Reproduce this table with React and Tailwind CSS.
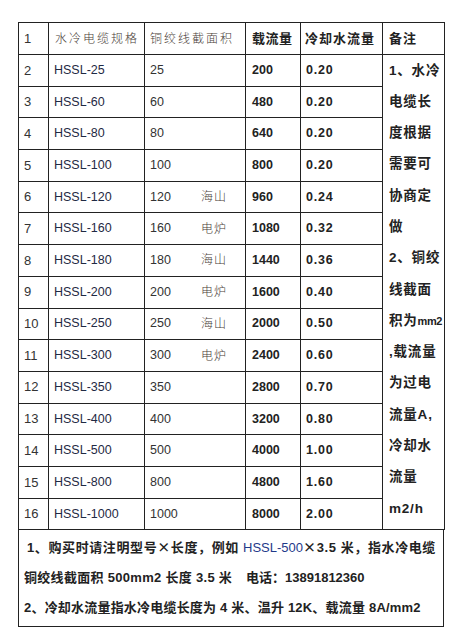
import React from "react";

const rows = [
  ["2", "HSSL-25", "25", "", "200", "0.20"],
  ["3", "HSSL-60", "60", "", "480", "0.20"],
  ["4", "HSSL-80", "80", "", "640", "0.20"],
  ["5", "HSSL-100", "100", "", "800", "0.20"],
  ["6", "HSSL-120", "120", "海山", "960", "0.24"],
  ["7", "HSSL-160", "160", "电炉", "1080", "0.32"],
  ["8", "HSSL-180", "180", "海山", "1440", "0.36"],
  ["9", "HSSL-200", "200", "电炉", "1600", "0.40"],
  ["10", "HSSL-250", "250", "海山", "2000", "0.50"],
  ["11", "HSSL-300", "300", "电炉", "2400", "0.60"],
  ["12", "HSSL-350", "350", "", "2800", "0.70"],
  ["13", "HSSL-400", "400", "", "3200", "0.80"],
  ["14", "HSSL-500", "500", "", "4000", "1.00"],
  ["15", "HSSL-800", "800", "", "4800", "1.60"],
  ["16", "HSSL-1000", "1000", "", "8000", "2.00"],
];

const remark = [
  "1、水冷",
  "电缆长",
  "度根据",
  "需要可",
  "协商定",
  "做",
  "2、铜绞",
  "线截面",
  "积为mm2",
  ",载流量",
  "为过电",
  "流量A,",
  "冷却水",
  "流量",
  "m2/h",
];

const cell = "border border-[#222] p-0 align-middle";
const cjk = "font-['Noto_Sans_CJK_SC',sans-serif]";

export default function App() {
  return (
    <div className="min-h-[639px] w-[456px] bg-white pl-[18px] pt-[22px] font-['Liberation_Sans','Noto_Sans_CJK_SC',sans-serif] text-[#222]">
      <table className="w-[426px] table-fixed border-collapse">
        <colgroup>
          <col className="w-[30px]" />
          <col className="w-[96px]" />
          <col className="w-[101px]" />
          <col className="w-[55px]" />
          <col className="w-[82px]" />
          <col className="w-[62px]" />
        </colgroup>
        <tbody>
          <tr className="h-[32px]">
            <td className={`${cell} pl-[5px] text-[13px] text-[#333]`}>1</td>
            <td className={`${cell} pl-[6px] font-light text-[12px] tracking-[2px] text-[#4a4038]`}>水冷电缆规格</td>
            <td className={`${cell} pl-[5px] font-light text-[12px] tracking-[2px] text-[#4a4038]`}>铜绞线截面积</td>
            <td className={`${cell} pl-[6px] font-bold text-[13px] tracking-[0.5px]`}>载流量</td>
            <td className={`${cell} pl-[4px] font-bold text-[13px] tracking-[1px]`}>冷却水流量</td>
            <td className={`${cell} pl-[6px] font-bold text-[13px] tracking-[1px]`}>备注</td>
          </tr>
          {rows.map((r, i) => (
            <tr key={r[0]} className="h-[31.7px]">
              <td className={`${cell} pl-[5px] text-[13px] text-[#333]`}>{r[0]}</td>
              <td className={`${cell} pl-[5px] text-[12.5px] text-[#1f2a44]`}>{r[1]}</td>
              <td className={`${cell} pl-[5px] text-[12.5px] text-[#333]`}>
                <div className="flex items-center">
                  <span className="w-[51px]">{r[2]}</span>
                  <span className="font-light text-[12px] tracking-[1px] text-[#4a4038]">{r[3]}</span>
                </div>
              </td>
              <td className={`${cell} pl-[6px] font-bold text-[12.5px]`}>{r[4]}</td>
              <td className={`${cell} pl-[5px] font-bold text-[12.5px] tracking-[0.8px]`}>{r[5]}</td>
              {i === 0 && (
                <td rowSpan={15} className={`${cell} align-top pl-[6px]`}>
                  {remark.map((t) =>
                    t === "积为mm2" ? (
                      <div key={t} className="flex h-[31.3px] items-center whitespace-nowrap font-bold text-[13.5px] tracking-[0.8px]">
                        积为<span className="text-[11px] tracking-[-0.5px]">mm2</span>
                      </div>
                    ) : (
                      <div key={t} className="flex h-[31.3px] items-center whitespace-nowrap font-bold text-[13.5px] tracking-[0.8px]">
                        {t}
                      </div>
                    )
                  )}
                </td>
              )}
            </tr>
          ))}
        </tbody>
      </table>
      <div className="w-[426px] border border-t-0 border-[#222] pt-[2px] pb-[3px] font-bold text-[13px] leading-[30px]">
        <div className="whitespace-nowrap pl-[8px] tracking-[0.6px]">
          1、购买时请注明型号<span className={cjk}>×</span>长度，例如 <span className="font-normal tracking-normal text-[#1f3a8a]">HSSL-500</span><span className={cjk}>×</span>3.5 米，指水冷电缆
        </div>
        <div className="flex whitespace-nowrap pl-[5px] tracking-[0.3px]">
          <span className="w-[222px]">铜绞线截面积 500mm2 长度 3.5 米</span>
          <span className="tracking-normal">电话：13891812360</span>
        </div>
        <div className="whitespace-nowrap pl-[5px] tracking-[0.2px]">2、冷却水流量指水冷电缆长度为 4 米、温升 12K、载流量 8A/mm2</div>
      </div>
    </div>
  );
}
